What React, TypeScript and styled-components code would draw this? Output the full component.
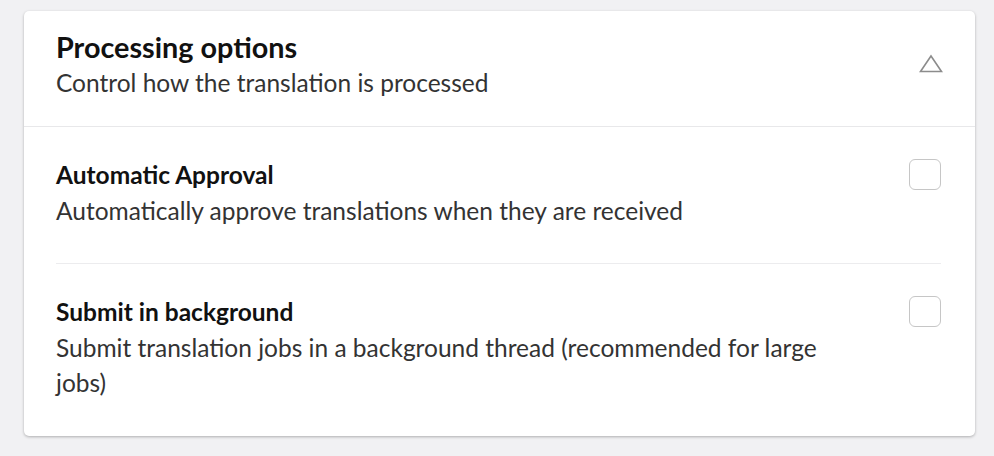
import React, { useState } from "react";
import styled, { createGlobalStyle } from "styled-components";

const GlobalStyle = createGlobalStyle`
	body {
		margin: 0;
		background: #f1f1f3;
		font-family: Lato, "Open Sans", sans-serif;
		color: #111;
	}
`;

const Page = styled.div`
	padding: 11px 19px 19px 24px;
`;

const Card = styled.section`
	background: #fff;
	border-radius: 5px;
	box-shadow: 0 1px 3px rgba(0, 0, 0, 0.28);
`;

const Header = styled.header`
	display: flex;
	align-items: flex-start;
	padding: 18px 32px 25px 32px;
	border-bottom: 1px solid #e8e8ea;
`;

const HeaderText = styled.div`
	flex: 1;
`;

const Title = styled.h2`
	margin: 0;
	font-size: 28.8px;
	line-height: 36px;
	font-weight: 700;
	color: #111;
`;

const Subtitle = styled.p`
	margin: 0;
	font-size: 24.5px;
	line-height: 36px;
	color: #333;
`;

const Toggle = styled.button`
	display: flex;
	border: 0;
	background: none;
	padding: 0;
	margin: 25px 0 0;
	cursor: pointer;
`;

const Body = styled.div`
	padding: 0 34px 1px 32px;
`;

const Row = styled.div`
	display: flex;
	align-items: flex-start;
	gap: 24px;
	padding: 30px 0 35px;

	& + & {
		border-top: 1px solid #ececee;
	}
`;

const RowText = styled.div`
	flex: 1;
`;

const Label = styled.div`
	font-size: 24.5px;
	line-height: 36px;
	font-weight: 700;
	color: #111;
`;

const Description = styled.div`
	max-width: 790px;
	margin-top: 0;
	font-size: 24.5px;
	line-height: 35px;
	color: #333;
`;

const Box = styled.input.attrs({ type: "checkbox" })`
	appearance: none;
	flex: none;
	width: 32px;
	height: 31px;
	margin: 2px 0 0;
	border: 1px solid #c6c6c6;
	border-radius: 6px;
	background: #fff;
	cursor: pointer;

	&:checked {
		background: #1d6fdc;
		border-color: #1d6fdc;
	}
`;

const options = [
	{
		label: "Automatic Approval",
		description: "Automatically approve translations when they are received",
	},
	{
		label: "Submit in background",
		description:
			"Submit translation jobs in a background thread (recommended for large jobs)",
	},
];

export default function App() {
	const [checked, setChecked] = useState<boolean[]>([false, false]);

	return (
		<Page>
			<GlobalStyle />
			<Card>
				<Header>
					<HeaderText>
						<Title>Processing options</Title>
						<Subtitle>Control how the translation is processed</Subtitle>
					</HeaderText>
					<Toggle aria-label="Collapse">
						<svg width="24" height="20" viewBox="0 0 24 20" fill="none">
							<path d="M12 2 L22.5 17.5 L1.5 17.5 Z" stroke="#8c8c8c" strokeWidth="1.6" strokeLinejoin="miter" />
						</svg>
					</Toggle>
				</Header>
				<Body>
					{options.map((o, i) => (
						<Row key={o.label}>
							<RowText>
								<Label>{o.label}</Label>
								<Description>{o.description}</Description>
							</RowText>
							<Box
								checked={checked[i]}
								onChange={() => setChecked(c => c.map((v, j) => (j === i ? !v : v)))}
							/>
						</Row>
					))}
				</Body>
			</Card>
		</Page>
	);
}
